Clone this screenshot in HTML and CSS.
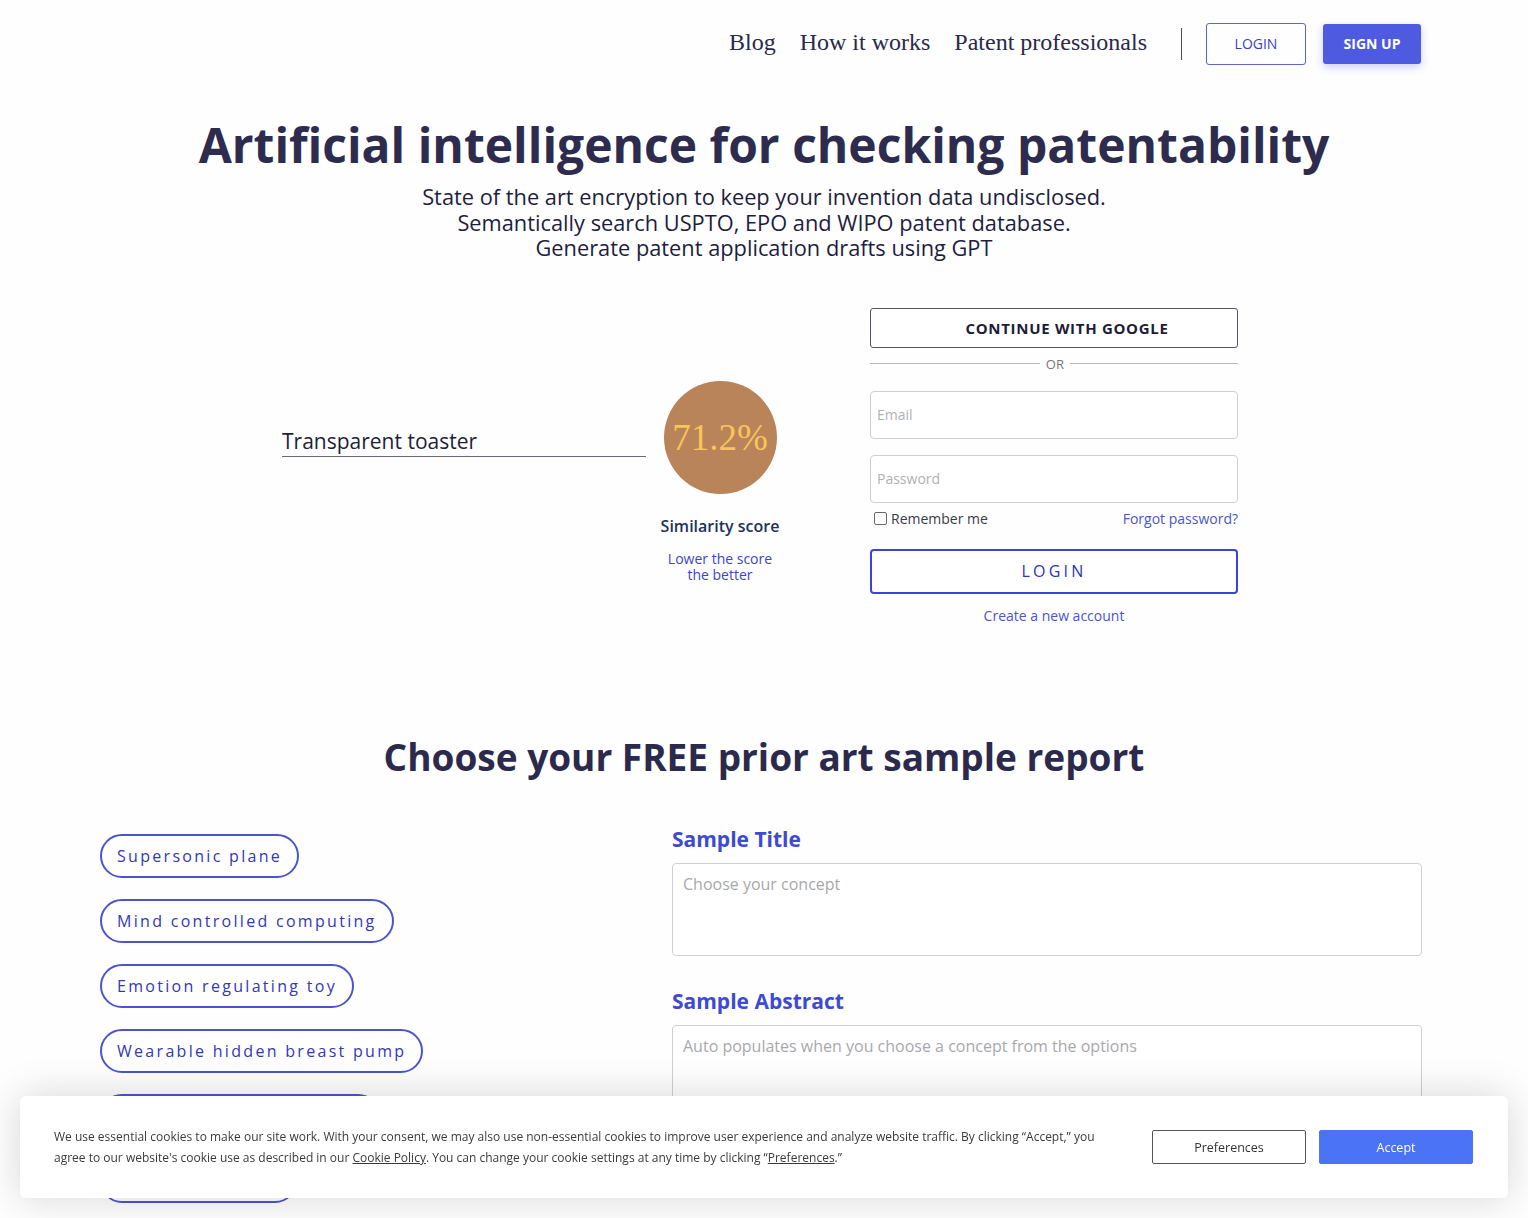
FILE: index.html
```html
<!DOCTYPE html>
<html lang="en">
<head>
<meta charset="utf-8">
<title>Patentability AI</title>
<link rel="stylesheet" href="styles.css">
</head>
<body>
<header class="topbar">
  <nav class="nav">
    <a class="nav-link" href="#">Blog</a>
    <a class="nav-link" href="#">How it works</a>
    <a class="nav-link" href="#">Patent professionals</a>
  </nav>
  <span class="nav-divider"></span>
  <a class="btn-login" href="#">LOGIN</a>
  <a class="btn-signup" href="#">SIGN UP</a>
</header>

<section class="hero">
  <h1 class="hero-title">Artificial intelligence for checking patentability</h1>
  <p class="hero-sub">State of the art encryption to keep your invention data undisclosed.<br>Semantically search USPTO, EPO and WIPO patent database.<br>Generate patent application drafts using GPT</p>
</section>

<section class="demo">
  <div class="concept">
    <div class="concept-input">Transparent toaster</div>
  </div>
  <div class="score">
    <div class="score-circle">71.2%</div>
    <div class="score-label">Similarity score</div>
    <div class="score-hint">Lower the score<br>the better</div>
  </div>
  <form class="auth">
    <button type="button" class="btn-google">CONTINUE WITH GOOGLE</button>
    <div class="or-row"><span class="or-line"></span><span class="or-text">OR</span><span class="or-line"></span></div>
    <input class="field" type="email" placeholder="Email">
    <input class="field" type="password" placeholder="Password">
    <div class="remember-row">
      <label class="remember"><span class="checkbox"></span>Remember me</label>
      <a class="link" href="#">Forgot password?</a>
    </div>
    <button type="button" class="btn-form-login">LOGIN</button>
    <a class="link create" href="#">Create a new account</a>
  </form>
</section>

<section class="samples">
  <h2 class="samples-title">Choose your FREE prior art sample report</h2>
  <div class="samples-grid">
    <div class="pills">
      <button type="button" class="pill">Supersonic plane</button>
      <button type="button" class="pill">Mind controlled computing</button>
      <button type="button" class="pill">Emotion regulating toy</button>
      <button type="button" class="pill">Wearable hidden breast pump</button>
      <button type="button" class="pill">Self heating lunch box lid</button>
      <button type="button" class="pill">Smart pet feeder</button>
    </div>
    <div class="sample-fields">
      <h3 class="field-label">Sample Title</h3>
      <div class="area area-title">Choose your concept</div>
      <h3 class="field-label label-abstract">Sample Abstract</h3>
      <div class="area area-abstract">Auto populates when you choose a concept from the options</div>
    </div>
  </div>
</section>

<div class="cookie">
  <p class="cookie-text">We use essential cookies to make our site work. With your consent, we may also use non-essential cookies to improve user experience and analyze website traffic. By clicking “Accept,” you agree to our website's cookie use as described in our <a href="#">Cookie Policy</a>. You can change your cookie settings at any time by clicking “<a href="#">Preferences</a>.”</p>
  <div class="cookie-actions">
    <button type="button" class="btn-pref">Preferences</button>
    <button type="button" class="btn-accept">Accept</button>
  </div>
</div>
</body>
</html>
```

FILE: styles.css
```css
* { box-sizing: border-box; }
html, body { margin: 0; padding: 0; }
body {
  background: #fefefe;
  font-family: "Open Sans", "Liberation Sans", sans-serif;
  color: #22223f;
  width: 1528px;
  height: 1218px;
  overflow: hidden;
}
a { text-decoration: none; }

.topbar {
  display: flex;
  align-items: center;
  justify-content: flex-end;
  padding: 23px 107px 0 0;
  height: 64px;
}
.nav { display: flex; gap: 24px; margin-right: 34px; margin-top: -3px; }
.nav-link {
  font-family: "Liberation Serif", "DejaVu Serif", serif;
  font-size: 24px;
  color: #2a2a48;
}
.nav-divider {
  width: 1px; height: 32px; background: #4a4a66; margin-right: 24px;
}
.btn-login {
  width: 100px; height: 42px;
  display: flex; align-items: center; justify-content: center;
  border: 1px solid #5f64d2; border-radius: 3px;
  color: #3b40bf; font-size: 14px; font-weight: 500;
  margin-right: 17px;
}
.btn-signup {
  width: 98px; height: 40px;
  display: flex; align-items: center; justify-content: center;
  background: #4e5be0; border-radius: 3px;
  color: #fff; font-size: 14px; font-weight: 700;
  box-shadow: 0 3px 8px rgba(78, 91, 224, 0.3);
}

.hero { text-align: center; }
.hero-title {
  margin: 51px 0 0;
  font-size: 48px;
  line-height: 60px;
  font-weight: 700;
  color: #2d2c4f;
}
.hero-sub {
  margin: 9px 0 0;
  font-size: 21.8px;
  line-height: 25.5px;
  color: #1e1d3e;
}

.demo {
  display: flex;
  align-items: flex-start;
  padding-left: 282px;
  margin-top: 47px;
}
.concept { width: 364px; padding-top: 119px; }
.concept-input {
  font-size: 21px;
  line-height: 28px;
  color: #1f1e38;
  padding-bottom: 1px;
  border-bottom: 1px solid #6a6a78;
}
.score {
  width: 146px;
  margin-left: 1px;
  display: flex; flex-direction: column; align-items: center;
  padding-top: 73px;
}
.score-circle {
  width: 113px; height: 113px; border-radius: 50%;
  background: #b9845a;
  display: flex; align-items: center; justify-content: center;
  font-family: "Liberation Serif", "DejaVu Serif", serif;
  font-size: 37px;
  color: #f7c55a;
}
.score-label {
  margin-top: 21px;
  font-size: 16px; font-weight: 600;
  color: #1d3257;
}
.score-hint {
  margin-top: 14px;
  text-align: center;
  font-size: 14px; line-height: 16px;
  color: #3d45c6;
}

.auth {
  width: 368px;
  margin-left: 77px;
  display: flex; flex-direction: column;
}
.btn-google {
  height: 40px;
  background: #fff;
  border: 1px solid #55556a; border-radius: 3px;
  font-family: "Open Sans", "Liberation Sans", sans-serif;
  font-size: 15px; font-weight: 700; letter-spacing: 0.7px;
  color: #1d1c38;
  padding-left: 32px;
}
.or-row {
  display: flex; align-items: center; gap: 6px;
  margin-top: 6px; height: 20px;
}
.or-line { flex: 1; height: 1px; background: #b8b8b8; }
.or-line:last-child { flex: 0 0 168px; }
.or-text { font-size: 13px; color: #777; }
.field {
  height: 48px;
  border: 1px solid #cfcfd2; border-radius: 4px;
  padding: 0 6px;
  font-family: "Open Sans", "Liberation Sans", sans-serif;
  font-size: 14px;
  background: #fff;
  margin-top: 17px;
}
.field + .field { margin-top: 16px; }
.field::placeholder { color: #b0b0b4; }
.remember-row {
  display: flex; justify-content: space-between; align-items: center;
  margin-top: 6px; height: 20px;
}
.remember {
  display: flex; align-items: center; gap: 4px;
  font-size: 14px; color: #3a3a44;
  padding-left: 4px;
}
.checkbox {
  width: 13px; height: 13px;
  border: 1px solid #66666e; border-radius: 2px; background: #fff;
}
.link { font-size: 14px; color: #4a56c8; }
.btn-form-login {
  margin-top: 20px;
  height: 45px;
  background: #fff;
  border: 2px solid #3b45d2; border-radius: 4px;
  font-family: "Open Sans", "Liberation Sans", sans-serif;
  font-size: 16px; letter-spacing: 3.2px;
  color: #2b35b6;
}
.create { align-self: center; margin-top: 12px; }

.samples { margin-top: 108px; }
.samples-title {
  margin: 0;
  text-align: center;
  font-size: 37px; line-height: 48px;
  font-weight: 700;
  color: #2b2a4c;
}
.samples-grid {
  display: grid;
  grid-template-columns: 572px 750px;
  padding-left: 100px;
  margin-top: 44px;
}
.pills {
  display: flex; flex-direction: column; align-items: flex-start;
  gap: 21px;
  padding-top: 9px;
}
.pill {
  height: 44px;
  padding: 0 15px 0 15px;
  background: #fff;
  border: 2px solid #4a55cc; border-radius: 22px;
  font-family: "Open Sans", "Liberation Sans", sans-serif;
  font-size: 16px; letter-spacing: 2.3px;
  color: #3238b6;
}
.field-label {
  margin: 0;
  font-size: 21px; line-height: 28px; font-weight: 700;
  color: #3d4bd2;
}
.area {
  margin-top: 10px;
  border: 1.5px solid #d0d0d4; border-radius: 4px;
  padding: 9px 10px;
  font-size: 16px; line-height: 22px;
  color: #a8a8ac;
  background: #fff;
}
.area-title { height: 93px; }
.label-abstract { margin-top: 31px; }
.area-abstract { height: 120px; }

.cookie {
  position: fixed;
  left: 20px; top: 1096px;
  width: 1488px; height: 102px;
  background: #fff;
  border-radius: 6px;
  box-shadow: 0 0 40px rgba(0, 0, 0, 0.16);
  display: flex; align-items: center;
  padding: 0 35px 0 34px;
}
.cookie-text {
  margin: 0;
  width: 1060px;
  font-size: 12px; line-height: 21px;
  color: #3a3a3a;
}
.cookie-text a { color: #3a3a3a; text-decoration: underline; }
.cookie-actions { display: flex; gap: 13px; margin-left: auto; }
.btn-pref, .btn-accept {
  width: 154px; height: 34px;
  border-radius: 2px;
  font-family: "Open Sans", "Liberation Sans", sans-serif;
  font-size: 12.5px;
}
.btn-pref { background: #fff; border: 1px solid #555; color: #333; }
.btn-accept { background: #4a74f5; border: 1px solid #4a74f5; color: #fff; }
```
